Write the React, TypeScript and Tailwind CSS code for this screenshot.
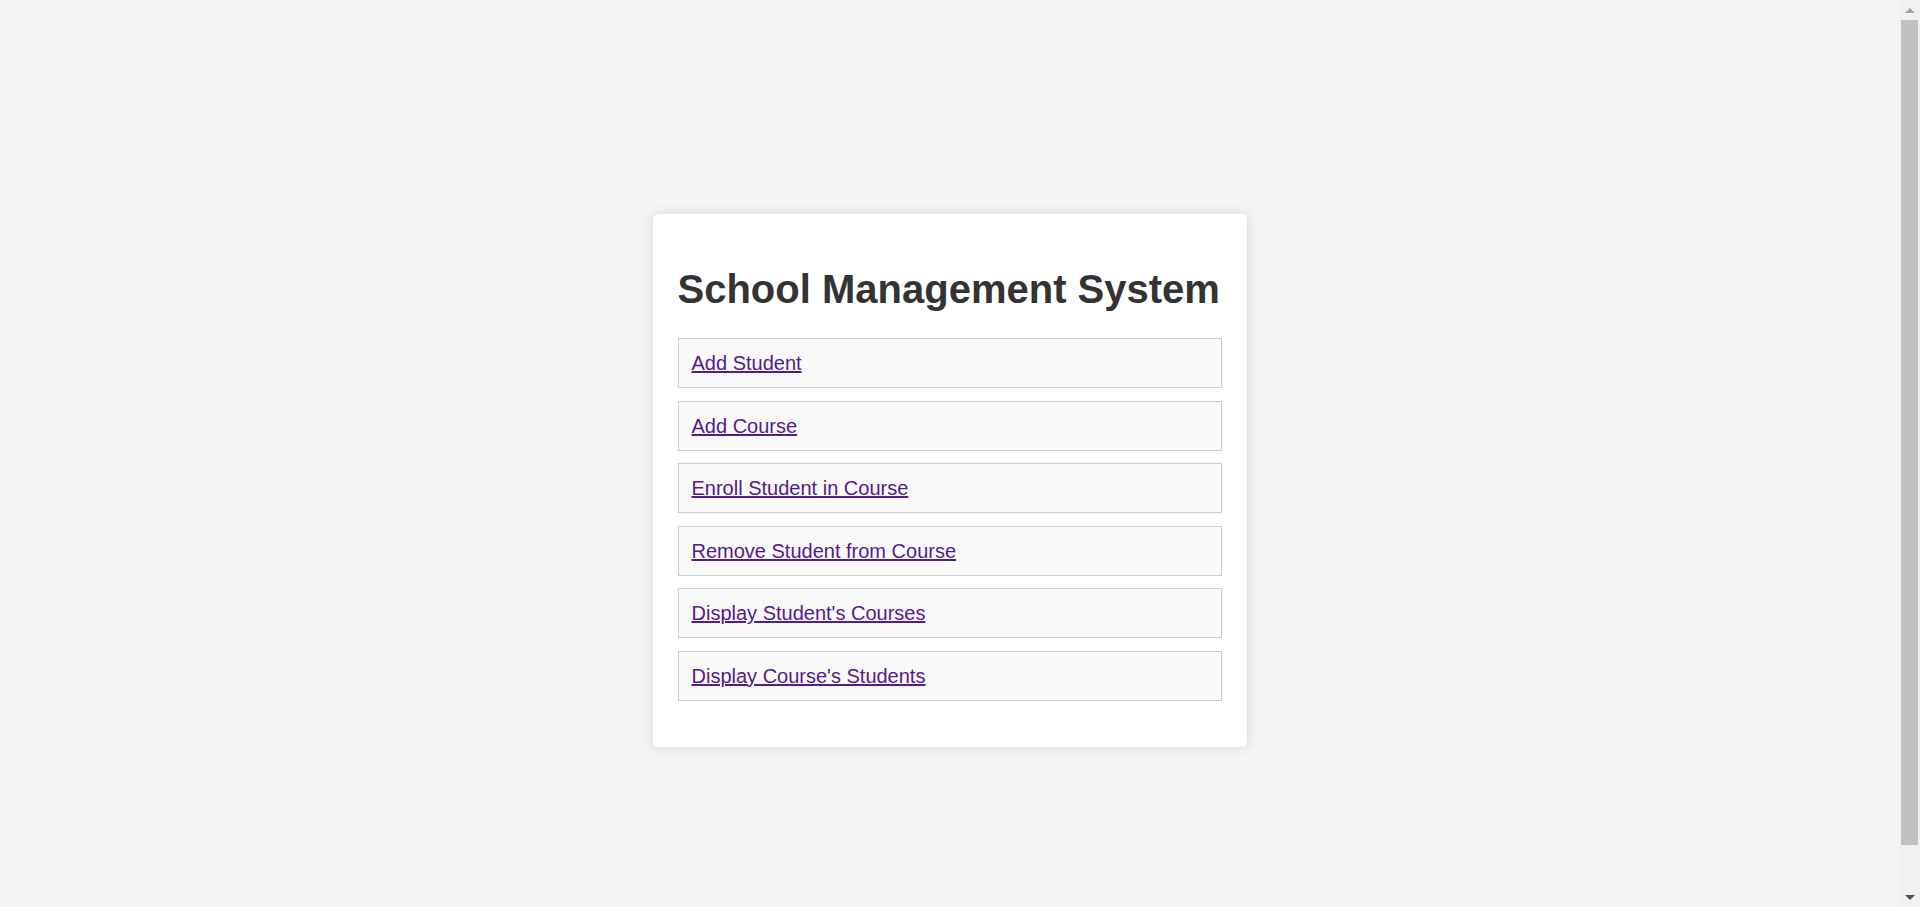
const links = [
  "Add Student",
  "Add Course",
  "Enroll Student in Course",
  "Remove Student from Course",
  "Display Student's Courses",
  "Display Course's Students",
];

function Scrollbar() {
  return (
    <div className="sticky top-0 h-screen w-[21px] shrink-0 bg-[#f1f1f1] flex flex-col items-center">
      <div className="h-[20px] w-full flex items-center justify-center">
        <div className="w-0 h-0 border-x-[5px] border-x-transparent border-b-[5px] border-b-[#a3a3a3]" />
      </div>
      <div className="flex-1 w-[17px] pb-[1px]">
        <div className="h-[825px] w-full bg-[#c1c1c1]" />
      </div>
      <div className="h-[20px] w-full flex items-center justify-center">
        <div className="w-0 h-0 border-x-[5px] border-x-transparent border-t-[5px] border-t-[#505050]" />
      </div>
    </div>
  );
}

export default function App() {
  return (
    <div className="flex bg-[#f4f4f4] font-['Liberation_Sans',Arial,sans-serif]">
      <main className="flex-1 min-h-screen box-content pt-[27px] pb-[25px] flex items-center justify-center">
        <div className="w-[594px] bg-white rounded-[5px] shadow-[0_0_12px_rgba(0,0,0,0.12)] px-[25px] pt-[25px] pb-[46px]">
          <h1 className="mt-[26.5px] mb-[26.5px] text-[40px] leading-[46px] font-bold text-[#333]">
            School Management System
          </h1>
          <ul className="flex flex-col gap-[12.5px]">
            {links.map((l) => (
              <li
                key={l}
                className="border border-[#ccc] bg-[#f9f9f9] px-[13px] py-[12px] text-[20px] leading-[24px]"
              >
                <a href="#" className="text-[#551a8b] underline">
                  {l}
                </a>
              </li>
            ))}
          </ul>
        </div>
      </main>
      <Scrollbar />
    </div>
  );
}
